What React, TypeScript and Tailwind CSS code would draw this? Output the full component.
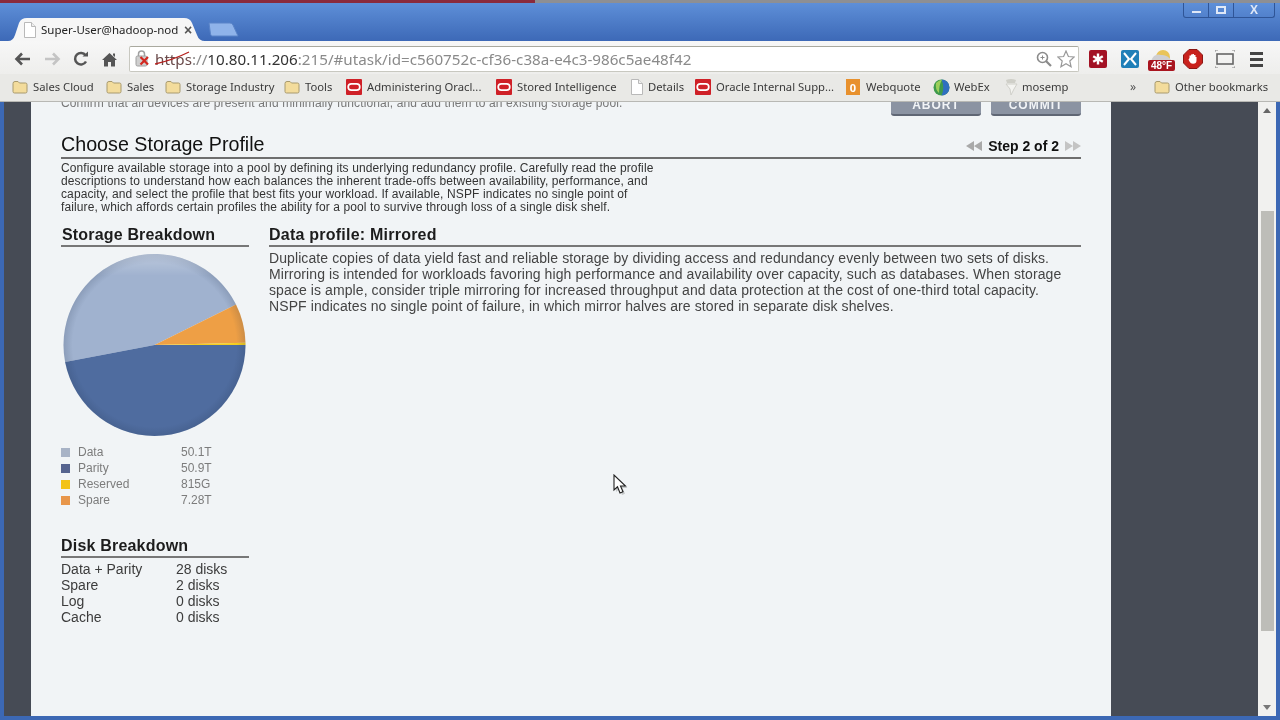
import React from "react";

const Folder = () => (
  <svg width="16" height="14" viewBox="0 0 16 14" className="shrink-0">
    <path d="M1 3.5 Q1 1.5 3 1.5 H6 L7.5 3 H13.5 Q15 3 15 4.5 V11.5 Q15 13 13.5 13 H2.5 Q1 13 1 11.5 Z" fill="#f3dc9c" stroke="#a89a6e" strokeWidth="1" />
  </svg>
);
const Oracle = () => (
  <svg width="16" height="16" viewBox="0 0 16 16" className="shrink-0">
    <rect width="16" height="16" fill="#cf2027" rx="1" />
    <rect x="2.2" y="4.8" width="11.6" height="6.4" rx="3.2" fill="none" stroke="#fff" strokeWidth="1.7" />
  </svg>
);
const Doc = ({ c = "#b9b9b9" }: { c?: string }) => (
  <svg width="14" height="16" viewBox="0 0 14 16" className="shrink-0">
    <path d="M1.5 .5 H8.5 L12.5 4.5 V15.5 H1.5 Z" fill="#fff" stroke={c} />
    <path d="M8.5 .5 V4.5 H12.5" fill="#eee" stroke={c} />
  </svg>
);
const Globe = () => (
  <svg width="17" height="17" viewBox="0 0 17 17" className="shrink-0">
    <circle cx="8.5" cy="8.5" r="8" fill="#3f9a4c" />
    <path d="M8.5 .5 A8 8 0 0 1 8.5 16.5 Q12 8.5 8.5 .5Z" fill="#2f6fc0" />
    <path d="M3 4 Q6 1 9 .8 Q6 6 6 14 Q2 11 3 4Z" fill="#9ccf5a" />
  </svg>
);
const Spark = () => (
  <svg width="16" height="18" viewBox="0 0 16 18" className="shrink-0">
    <path d="M3 2 Q8 0 13 2 L12 5 H4 Z" fill="#cfcfc8" />
    <path d="M3 6 H14 L11 11 L8 17 L7 11 Z" fill="#f4f4f1" stroke="#d0d0ca" />
  </svg>
);
const Wq = () => (
  <span className="flex h-[16px] w-[14px] shrink-0 items-center justify-center bg-[#e8912d] text-[11px] font-bold leading-none text-white">0</span>
);

function Bookmark({ icon, label, cls }: { icon: React.ReactNode; label: string; cls: string }) {
  return (
    <div className={"flex shrink-0 items-center " + cls}>
      <span className="flex w-[21px] shrink-0 items-center">{icon}</span>
      <span className="whitespace-nowrap text-[11.25px] text-[#3a3a3a]">{label}</span>
    </div>
  );
}

const DESC = [
  "Configure available storage into a pool by defining its underlying redundancy profile. Carefully read the profile",
  "descriptions to understand how each balances the inherent trade-offs between availability, performance, and",
  "capacity, and select the profile that best fits your workload. If available, NSPF indicates no single point of",
  "failure, which affords certain profiles the ability for a pool to survive through loss of a single disk shelf.",
];
const PROFILE = [
  "Duplicate copies of data yield fast and reliable storage by dividing access and redundancy evenly between two sets of disks.",
  "Mirroring is intended for workloads favoring high performance and availability over capacity, such as databases. When storage",
  "space is ample, consider triple mirroring for increased throughput and data protection at the cost of one-third total capacity.",
  "NSPF indicates no single point of failure, in which mirror halves are stored in separate disk shelves.",
];

function Pie() {
  const cx = 93.5, cy = 92, r = 91;
  const p = (deg: number) => {
    const t = (deg * Math.PI) / 180;
    return `${(cx + r * Math.cos(t)).toFixed(2)} ${(cy + r * Math.sin(t)).toFixed(2)}`;
  };
  const slice = (from: number, to: number, large: 0 | 1, fill: string) => (
    <path d={`M${cx} ${cy} L${p(from)} A${r} ${r} 0 ${large} 1 ${p(to)} Z`} fill={fill} />
  );
  return (
    <svg width="188" height="184" viewBox="0 0 188 184" className="block">
      <defs>
        <radialGradient id="edge" cx="50%" cy="50%" r="50%">
          <stop offset="90%" stopColor="#20304a" stopOpacity="0" />
          <stop offset="100%" stopColor="#20304a" stopOpacity="0.16" />
        </radialGradient>
        <linearGradient id="top" x1="0" y1="0" x2="0" y2="1">
          <stop offset="0%" stopColor="#fff" stopOpacity="0.3" />
          <stop offset="12%" stopColor="#fff" stopOpacity="0" />
        </linearGradient>
      </defs>
      {slice(169.25, 333.6, 0, "#a0b2cf")}
      {slice(333.6, 358.6, 0, "#ee9f45")}
      {slice(358.6, 360, 0, "#f5ce1f")}
      {slice(0, 169.25, 0, "#4f6c9f")}
      <circle cx={cx} cy={cy} r={r} fill="url(#edge)" />
      <circle cx={cx} cy={cy} r={r} fill="url(#top)" />
    </svg>
  );
}

const LEGEND = [
  ["Data", "50.1T", "bg-[#a8b3c6]"],
  ["Parity", "50.9T", "bg-[#56648f]"],
  ["Reserved", "815G", "bg-[#f3c317]"],
  ["Spare", "7.28T", "bg-[#e8964a]"],
];
const DISKS = [
  ["Data + Parity", "28 disks"],
  ["Spare", "2 disks"],
  ["Log", "0 disks"],
  ["Cache", "0 disks"],
];

export default function App() {
  return (
    <div className="relative flex h-[720px] w-[1280px] flex-col overflow-hidden bg-[#3c68b4] blur-[0.35px] font-['Liberation_Sans',Arial,sans-serif]">
      {/* title strip */}
      <div className="flex h-[3px] shrink-0">
        <div className="h-full w-[535px] bg-[#8a2a3c]" />
        <div className="h-full flex-1 bg-[#8d8f94]" />
      </div>
      <div className="flex h-[38px] shrink-0 items-end justify-between bg-gradient-to-b from-[#5e8fd8] to-[#3d69b7] pl-[8px]">
        <div className="flex items-end">
          <div className="relative h-[23px] w-[197px]">
            <svg width="197" height="23" viewBox="0 0 197 23" className="absolute left-0 top-0">
              <path d="M0 23 Q5 23 7 17 L11 5 Q13 0 19 0 H176 Q182 0 184 5 L189 17 Q191 23 197 23 Z" fill="#f6f6f6" />
            </svg>
            <div className="relative flex h-full items-center pl-[15px]">
              <Doc />
              <span className="ml-[4px] w-[136px] whitespace-nowrap font-['Noto_Sans',sans-serif] text-[11.5px] text-[#222]">Super-User@hadoop-nod</span>
              <span className="ml-[7px] text-[14px] font-bold leading-none text-[#555]">×</span>
            </div>
          </div>
          <svg width="32" height="15" viewBox="0 0 32 15" className="mb-[4px] ml-[2px]">
            <path d="M2 1 H23 Q25 1 26 3 L31 14 H5 Q4 14 3.5 12 Z" fill="#8fb3ea" stroke="#5a84c8" />
          </svg>
        </div>
        <div className="mb-[23px] mr-[5px] flex h-[15px] items-center rounded-b-[3px] border border-t-0 border-[#2f5597] text-[#cfdcf2]">
          <div className="flex h-full w-[25px] items-center justify-center border-r border-[#2f5597]"><div className="mt-[4px] h-[2px] w-[9px] bg-[#dfe8f7]" /></div>
          <div className="flex h-full w-[25px] items-center justify-center border-r border-[#2f5597]"><div className="h-[8px] w-[10px] border-2 border-[#dfe8f7]" /></div>
          <div className="flex h-full w-[40px] items-center justify-center text-[12px] font-bold leading-none text-[#dfe8f7]">X</div>
        </div>
      </div>

      {/* toolbar */}
      <div className="flex h-[33px] shrink-0 items-center bg-gradient-to-b from-[#f7f7f7] to-[#eeeeec] pl-[14px] pt-[3px]">
        <svg width="17" height="14" viewBox="0 0 17 14" className="mr-[13px]"><path d="M16 7 H3 M8 1.5 L2.5 7 L8 12.5" fill="none" stroke="#555" strokeWidth="2.6" /></svg>
        <svg width="17" height="14" viewBox="0 0 17 14" className="mr-[12px]"><path d="M1 7 H14 M9 1.5 L14.5 7 L9 12.5" fill="none" stroke="#c4c4c4" strokeWidth="2.6" /></svg>
        <svg width="16" height="16" viewBox="0 0 16 16" className="mr-[13px]"><path d="M13 10.5 A5.8 5.8 0 1 1 12.6 4.3" fill="none" stroke="#555" strokeWidth="2.5" /><path d="M9.5 5.5 H15 V0.5 Z" fill="#555" /></svg>
        <svg width="15" height="15" viewBox="0 0 15 15" className="mr-[12px]"><path d="M7.5 1 L15 8 H13 V14.5 H9 V10 H6 V14.5 H2 V8 H0 Z M11 1.5 H13 V5 L11 3.2 Z" fill="#555" /></svg>
        <div className="flex h-[26px] w-[950px] items-center rounded-[2px] border border-[#c8c8c0] border-t-[#a9a99f] bg-white pl-[5px] pr-[3px]">
          <svg width="20" height="18" viewBox="0 0 20 18" className="shrink-0">
            <rect x="1" y="6" width="11" height="10" rx="1.5" fill="#cfcfcf" stroke="#a0a0a0" />
            <path d="M3.5 6 V4 A3 3 0 0 1 9.5 4 V6" fill="none" stroke="#a0a0a0" strokeWidth="1.5" />
            <path d="M5.5 7 L13 14.5 M13 7 L5.5 14.5" stroke="#d3271f" strokeWidth="2.2" />
          </svg>
          <span className="whitespace-nowrap font-['Noto_Sans',sans-serif] text-[15.2px] text-[#8a8a8a]">
            <span className="relative inline-block text-[#6a4a4a]">
              https
              <svg width="36" height="14" viewBox="0 0 36 14" className="absolute left-0 top-[3px]"><path d="M0 13 Q18 9 34 1" fill="none" stroke="#b7211e" strokeWidth="1.3" /></svg>
            </span>
            ://<span className="text-[#333]">10.80.11.206</span>:215/#utask/id=c560752c-cf36-c38a-e4c3-986c5ae48f42
          </span>
          <div className="ml-auto flex items-center gap-[5px]">
            <svg width="16" height="16" viewBox="0 0 16 16"><circle cx="6.5" cy="6.5" r="5" fill="none" stroke="#8b8b8b" strokeWidth="1.6" /><path d="M10 10 L15 15" stroke="#8b8b8b" strokeWidth="2.2" /><path d="M4.5 6.5 H8.5 M6.5 4.5 V8.5" stroke="#8b8b8b" /></svg>
            <svg width="18" height="18" viewBox="0 0 18 18"><path d="M9 1 L11.4 6.5 L17.2 7 L12.8 11 L14.1 16.8 L9 13.8 L3.9 16.8 L5.2 11 L.8 7 L6.6 6.5 Z" fill="#fff" stroke="#999" strokeWidth="1.2" /></svg>
          </div>
        </div>
        <div className="ml-[10px] flex items-center">
          <svg width="18" height="18" viewBox="0 0 18 18"><rect width="18" height="18" rx="2" fill="#a31224" /><path d="M9 3.5 V14.5 M4.2 6.2 L13.8 11.8 M13.8 6.2 L4.2 11.8" stroke="#fff" strokeWidth="2.4" /></svg>
          <svg width="18" height="18" viewBox="0 0 18 18" className="ml-[14px]"><rect width="18" height="18" rx="2" fill="#1f7fb8" /><path d="M3 3 L8 9 L3 15 M15 3 L10 9 L15 15" fill="none" stroke="#fff" strokeWidth="2" /></svg>
          <div className="relative ml-[9px] h-[24px] w-[27px]">
            <svg width="27" height="14" viewBox="0 0 27 14" className="absolute left-0 top-0"><circle cx="15" cy="10" r="7" fill="#e9c45a" /><path d="M3 14 Q6 6 13 8 Q19 7 24 14Z" fill="#cfcfd2" /></svg>
            <div className="absolute bottom-0 left-0 flex h-[11px] w-[27px] items-center justify-center rounded-[2px] bg-[#a9151f] text-[10px] font-bold leading-none text-white">48°F</div>
          </div>
          <svg width="20" height="20" viewBox="0 0 20 20" className="ml-[8px]"><path d="M6 .5 H14 L19.5 6 V14 L14 19.5 H6 L.5 14 V6 Z" fill="#c9221d" stroke="#8c1714" /><path d="M6.5 9 V6.5 H8 V5.5 H9.5 V5 H11 V6 H12.5 V8 H13.5 V11.5 Q13.5 14.8 10 14.8 Q7.5 14.8 6.5 12.5 L5.5 10.5 Z" fill="#fff" /></svg>
          <svg width="20" height="18" viewBox="0 0 20 18" className="ml-[12px]"><rect x="2" y="4" width="16" height="10" fill="none" stroke="#666" strokeWidth="1.6" /><path d="M0 2 V0 H3 M17 0 H20 V2 M0 16 V18 H3 M17 18 H20 V16" fill="none" stroke="#888" /></svg>
          <div className="ml-[15px] flex flex-col gap-[3px]">
            <div className="h-[3px] w-[13px] bg-[#444]" />
            <div className="h-[3px] w-[13px] bg-[#444]" />
            <div className="h-[3px] w-[13px] bg-[#444]" />
          </div>
        </div>
      </div>

      {/* bookmarks */}
      <div className="flex h-[28px] shrink-0 items-center border-b border-[#b8b8b4] bg-[#e9e9e6] pb-[1px] pl-[12px] font-['Noto_Sans',sans-serif]">
        <Bookmark icon={<Folder />} label="Sales Cloud" cls="w-[94px]" />
        <Bookmark icon={<Folder />} label="Sales" cls="w-[59px]" />
        <Bookmark icon={<Folder />} label="Storage Industry" cls="w-[119px]" />
        <Bookmark icon={<Folder />} label="Tools" cls="w-[62px]" />
        <Bookmark icon={<Oracle />} label="Administering Oracl..." cls="w-[150px]" />
        <Bookmark icon={<Oracle />} label="Stored Intelligence" cls="w-[134px]" />
        <div className="flex w-[65px] shrink-0 items-center"><span className="flex w-[18px] shrink-0"><Doc /></span><span className="whitespace-nowrap text-[11.25px] text-[#3a3a3a]">Details</span></div>
        <Bookmark icon={<Oracle />} label="Oracle Internal Supp..." cls="w-[151px]" />
        <div className="flex w-[87px] shrink-0 items-center"><span className="flex w-[20px] shrink-0"><Wq /></span><span className="whitespace-nowrap text-[11.25px] text-[#3a3a3a]">Webquote</span></div>
        <Bookmark icon={<Globe />} label="WebEx" cls="w-[70px]" />
        <div className="flex w-[127px] shrink-0 items-center"><span className="flex w-[19px] shrink-0"><Spark /></span><span className="whitespace-nowrap text-[11.25px] text-[#3a3a3a]">mosemp</span></div>
        <span className="w-[24px] shrink-0 text-[12px] text-[#555]">»</span>
        <Bookmark icon={<Folder />} label="Other bookmarks" cls="w-[113px]" />
      </div>

      {/* viewport */}
      <div className="flex min-h-0 flex-1 pb-[4px] pl-[4px] pr-[4px]">
        <div className="w-[27px] shrink-0 bg-[#464b55]" />
        <div className="w-[1080px] shrink-0 overflow-hidden bg-[#f1f4f6] pl-[30px] pr-[30px]">
          <div className="flex h-[14px] items-start justify-between overflow-hidden">
            <div className="-mt-[5px] whitespace-nowrap text-[12px] leading-[13px] tracking-[0.14px] text-[#777]">Confirm that all devices are present and minimally functional, and add them to an existing storage pool.</div>
            <div className="-mt-[6px] flex gap-[10px]">
              <div className="flex h-[20px] w-[90px] items-center justify-center rounded-b-[3px] border-b-2 border-[#5f6674] bg-[#8b93a2] text-[12px] font-bold tracking-[1px] text-[#f2f4f7]">ABORT</div>
              <div className="flex h-[20px] w-[90px] items-center justify-center rounded-b-[3px] border-b-2 border-[#5f6674] bg-[#8b93a2] text-[12px] font-bold tracking-[1px] text-[#f2f4f7]">COMMIT</div>
            </div>
          </div>
          <div className="flex h-[44px] items-end justify-between border-b-2 border-[#6e6e6e] -mt-[1px]">
            <div className="text-[19.7px] leading-[26px] text-[#111]">Choose Storage Profile</div>
            <div className="flex h-[22px] items-center text-[14px] font-bold text-[#111]">
              <svg width="16" height="10" viewBox="0 0 16 10" className="mr-[6px]"><path d="M8 0 V10 L0 5Z M16 0 V10 L8 5Z" fill="#a9a9a9" /></svg>
              Step 2 of 2
              <svg width="16" height="10" viewBox="0 0 16 10" className="ml-[6px]"><path d="M0 0 V10 L8 5Z M8 0 V10 L16 5Z" fill="#c4c4c4" /></svg>
            </div>
          </div>
          <div className="mt-[3px] text-[12px] leading-[13px] tracking-[0.113px] text-[#333]">
            {DESC.map((l) => <div key={l} className="whitespace-nowrap">{l}</div>)}
          </div>
          <div className="mt-[11px] flex gap-[20px]">
            <div className="w-[188px] shrink-0">
              <div className="flex h-[22px] items-center border-b-2 border-[#777] pl-[1px] text-[16px] font-bold tracking-[0.17px] text-[#1c1c1c]">Storage Breakdown</div>
              <div className="mt-[6px]"><Pie /></div>
              <div className="mt-[7px] text-[12px] leading-[16px] text-[#7c7c7c]">
                {LEGEND.map(([n, v, c]) => (
                  <div key={n} className="flex items-center">
                    <span className={"h-[9px] w-[9px] shrink-0 " + c} />
                    <span className="ml-[8px] w-[103px]">{n}</span>
                    <span>{v}</span>
                  </div>
                ))}
              </div>
              <div className="mt-[28px] flex h-[22px] items-center border-b-2 border-[#777] text-[16px] font-bold tracking-[0.2px] text-[#1c1c1c]">Disk Breakdown</div>
              <div className="mt-[3px] text-[14px] leading-[16px] text-[#3c3c3c]">
                {DISKS.map(([n, v]) => (
                  <div key={n} className="flex"><span className="w-[115px]">{n}</span><span>{v}</span></div>
                ))}
              </div>
            </div>
            <div className="min-w-0 flex-1">
              <div className="flex h-[22px] items-center border-b-2 border-[#777] text-[16px] font-bold tracking-[0.23px] text-[#1c1c1c]">Data profile: Mirrored</div>
              <div className="mt-[3px] text-[14px] leading-[16px] tracking-[0.09px] text-[#444]">
                {PROFILE.map((l) => <div key={l} className="whitespace-nowrap">{l}</div>)}
              </div>
            </div>
          </div>
        </div>
        <div className="w-[147px] shrink-0 bg-[#464b55]" />
        <div className="flex w-[18px] shrink-0 flex-col items-center bg-[#f1f1ef]">
          <div className="mt-[6px] h-0 w-0 border-x-[4px] border-b-[5px] border-x-transparent border-b-[#666]" />
          <div className="mt-[98px] h-[420px] w-[13px] bg-[#bdbdb8]" />
          <div className="mt-auto mb-[6px] h-0 w-0 border-x-[4px] border-t-[5px] border-x-transparent border-t-[#777]" />
        </div>
      </div>

      {/* mouse cursor */}
      <svg width="16" height="23" viewBox="0 0 16 23" className="absolute left-[613px] top-[474px]">
        <path d="M3 3 L3 18 L6.5 14.8 L9 21 L12 19.8 L9.5 14 L14.5 14 Z" fill="#000" opacity="0.18" />
        <path d="M1 1 L1 16 L4.5 12.8 L7 19 L10 17.8 L7.5 12 L12.5 12 Z" fill="#fff" stroke="#222" strokeWidth="1.1" />
      </svg>
    </div>
  );
}
